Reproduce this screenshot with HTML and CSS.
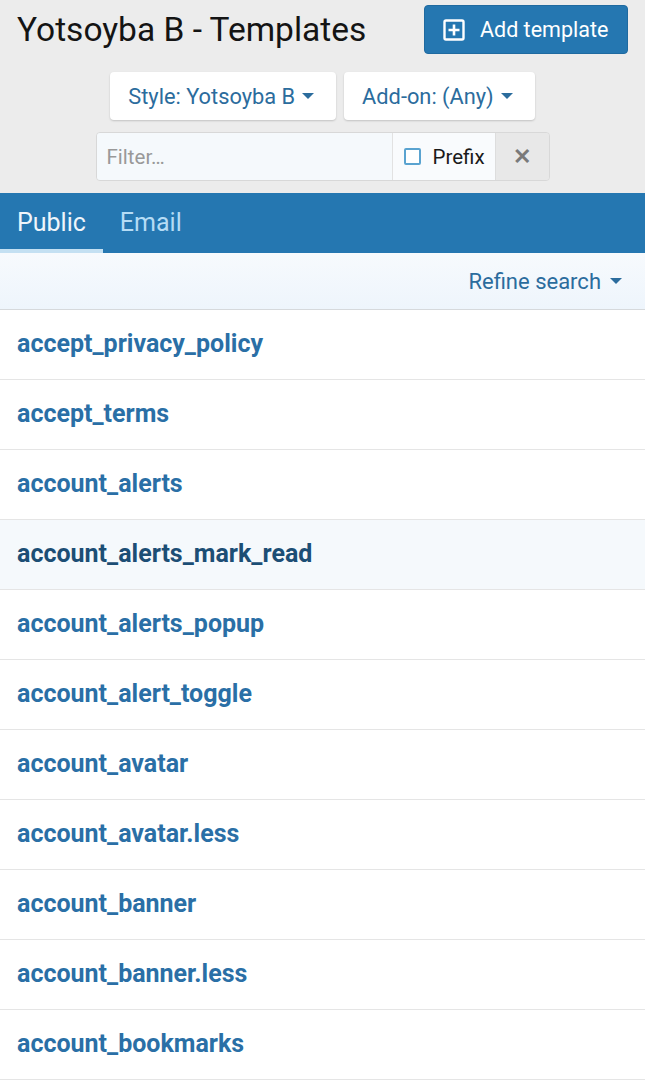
FILE: index.html
```html
<!DOCTYPE html>
<html>
<head>
<meta charset="utf-8">
<link rel="stylesheet" href="styles.css">
</head>
<body>
<header class="head">
  <div class="top">
    <h1 class="title">Yotsoyba B - Templates</h1>
    <a class="btn-add"><svg class="ico" viewBox="0 0 22 22" width="22" height="22"><rect x="1.5" y="1.5" width="19" height="19" rx="1.5" fill="none" stroke="#fff" stroke-width="2.4"/><path d="M11 5.5v11M5.5 11h11" stroke="#fff" stroke-width="2.6"/></svg><span>Add template</span></a>
  </div>
  <div class="menus">
    <a class="menu">Style: Yotsoyba B <span class="caret"></span></a>
    <a class="menu">Add-on: (Any) <span class="caret"></span></a>
  </div>
  <div class="filter">
    <span class="input">Filter…</span>
    <label class="prefix"><span class="box"></span>Prefix</label>
    <span class="clear">✕</span>
  </div>
</header>
<nav class="tabs">
  <a class="tab active">Public</a>
  <a class="tab">Email</a>
</nav>
<div class="refine"><a>Refine search <span class="caret"></span></a></div>
<ul class="list">
  <li>accept_privacy_policy</li>
  <li>accept_terms</li>
  <li>account_alerts</li>
  <li class="hover">account_alerts_mark_read</li>
  <li>account_alerts_popup</li>
  <li>account_alert_toggle</li>
  <li>account_avatar</li>
  <li>account_avatar.less</li>
  <li>account_banner</li>
  <li>account_banner.less</li>
  <li>account_bookmarks</li>
</ul>
</body>
</html>
```
FILE: styles.css
```css
* { box-sizing: border-box; }
body { margin: 0; font-family: Roboto, "Liberation Sans", sans-serif; background: #fff; }
.head { background: #ececec; padding: 5px 17px 12px 17px; }
.top { display: flex; justify-content: space-between; align-items: center; }
.title { margin: 0; font-size: 33.5px; font-weight: 400; color: #141414; line-height: 49px; }
.btn-add { display: flex; align-items: center; gap: 15px; height: 49px; width: 204px; padding: 0 18px; background: #2577b1; color: #fff; font-size: 21.5px; border-radius: 4px; border: 1px solid #1f6aa0; }
.ico { display: block; }
.menus { display: flex; justify-content: center; gap: 8px; margin-top: 18px; }
.menu { display: flex; align-items: center; height: 48px; padding: 0 22px 0 18px; background: #fff; color: #2b6c9d; font-size: 21.8px; border-radius: 4px; box-shadow: 0 1px 2px rgba(0,0,0,0.18); }
.caret { display: inline-block; width: 0; height: 0; border-left: 6px solid transparent; border-right: 6px solid transparent; border-top: 6px solid currentColor; margin-left: 7px; }
.filter { display: flex; width: 454px; height: 49px; margin: 12px auto 0; border: 1px solid #d8d8d8; border-radius: 4px; overflow: hidden; }
.input { flex: 1; display: flex; align-items: center; padding-left: 10px; background: #f5f9fc; color: #999; font-size: 20.5px; }
.prefix { display: flex; align-items: center; width: 103px; padding-left: 11px; gap: 12px; background: #f9fbfd; border-left: 1px solid #e2e2e2; color: #1a1a1a; font-size: 20.5px; }
.box { width: 17px; height: 17px; border: 2px solid #5aa3d0; border-radius: 2px; background: #fff; }
.clear { display: flex; align-items: center; justify-content: center; width: 54px; background: #e8e8e8; color: #7a7a7a; font-size: 22px; font-weight: 700; border-left: 1px solid #ddd; }
.tabs { display: flex; height: 60px; background: #2577b1; }
.tab { display: flex; align-items: center; padding: 0 17px; font-size: 25px; color: #b5dcf5; border-bottom: 4px solid transparent; padding-top: 2px; }
.tab.active { color: #eef5fb; border-bottom-color: #c4e0f2; }
.refine { display: flex; justify-content: flex-end; align-items: center; height: 57px; padding-right: 23px; background: linear-gradient(#f7fafd, #eef5fc); border-bottom: 1px solid #d6d9dc; }
.refine a { color: #2b6c9d; font-size: 22px; display: flex; align-items: center; }
.refine .caret { margin-left: 9px; }
.list { list-style: none; margin: 0; padding: 0; }
.list li { height: 70px; display: flex; align-items: center; padding: 0 17px 2px; border-bottom: 1px solid #e5e5e5; font-size: 25px; font-weight: 700; color: #2a6fa6; }
.list li.hover { background: #f5f9fc; color: #1c4e75; }
```
